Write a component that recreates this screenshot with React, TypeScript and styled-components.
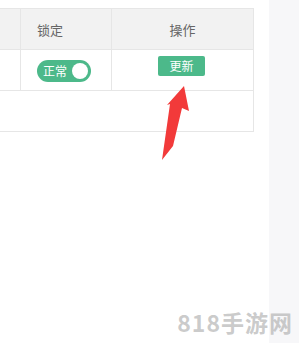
import React from 'react';
import styled, { createGlobalStyle } from 'styled-components';

const GlobalStyle = createGlobalStyle`
  html, body {
    margin: 0;
    padding: 0;
    background: #fff;
  }
  body {
    font-family: 'Noto Sans CJK SC', 'Noto Sans', sans-serif;
  }
`;

// Styled Components
const Page = styled.div`
  position: relative;
  width: 299px;
  height: 343px;
  display: flex;
  overflow: hidden;
`;

const Main = styled.div`
  width: 269px;
  padding-top: 8px;
  box-sizing: border-box;
`;

const Side = styled.div`
  flex: 1;
  background: #f7f7f9;
`;

const Table = styled.div`
  width: 254px;
  border-top: 1px solid #e6e6e6;
  border-right: 1px solid #e6e6e6;
  box-sizing: border-box;
`;

const Row = styled.div<{ $head?: boolean }>`
  display: grid;
  grid-template-columns: 21px 91px 1fr;
  height: 41px;
  border-bottom: 1px solid #e6e6e6;
  background: ${(p) => (p.$head ? '#f2f2f2' : '#fff')};
  box-sizing: border-box;
`;

const Cell = styled.div<{ $center?: boolean; $last?: boolean }>`
  display: flex;
  align-items: center;
  justify-content: ${(p) => (p.$center ? 'center' : 'flex-start')};
  padding-left: ${(p) => (p.$center ? '0' : '16px')};
  border-right: ${(p) => (p.$last ? 'none' : '1px solid #e6e6e6')};
  font-size: 13px;
  color: #666;
`;

const Footer = styled.div`
  height: 41px;
  border-bottom: 1px solid #e6e6e6;
  box-sizing: border-box;
`;

const Toggle = styled.div`
  width: 54px;
  height: 22px;
  border-radius: 11px;
  background: #4cb98a;
  display: flex;
  align-items: center;
  justify-content: space-between;
  padding: 0 3px 0 6px;
  box-sizing: border-box;
  margin-top: 1px;
  color: #fff;
  font-size: 12px;
`;

const Knob = styled.span`
  width: 16px;
  height: 16px;
  border-radius: 50%;
  background: #fff;
`;

const UpdateButton = styled.button`
  width: 47px;
  height: 20px;
  border: none;
  border-radius: 2px;
  background: #4cb98a;
  color: #fff;
  font-family: 'Noto Sans CJK SC', sans-serif;
  font-size: 12px;
  line-height: 20px;
  padding: 0;
  margin-bottom: 9px;
  margin-left: -2px;
`;

const Arrow = styled.svg`
  position: absolute;
  left: 0;
  top: 0;
  pointer-events: none;
`;

const Watermark = styled.div`
  position: absolute;
  right: 6px;
  bottom: 9px;
  font-family: 'Noto Sans CJK SC', sans-serif;
  font-weight: 700;
  font-size: 23px;
  letter-spacing: 1px;
  line-height: 1;
  color: rgba(180, 180, 180, 0.7);
`;

const App: React.FC = () => {
  return (
    <>
      <GlobalStyle />
      <Page>
        <Main>
          <Table>
            <Row $head>
              <Cell />
              <Cell>锁定</Cell>
              <Cell $center $last>操作</Cell>
            </Row>
            <Row>
              <Cell />
              <Cell>
                <Toggle>
                  正常
                  <Knob />
                </Toggle>
              </Cell>
              <Cell $center $last>
                <UpdateButton>更新</UpdateButton>
              </Cell>
            </Row>
            <Footer />
          </Table>
        </Main>
        <Side />
        <Arrow width="299" height="343" viewBox="0 0 299 343">
          <polygon
            points="184,86 189,111 182,108 173,146 162,160 170,104 167,105"
            fill="#f23a3a"
          />
        </Arrow>
        <Watermark>818手游网</Watermark>
      </Page>
    </>
  );
};

export default App;
